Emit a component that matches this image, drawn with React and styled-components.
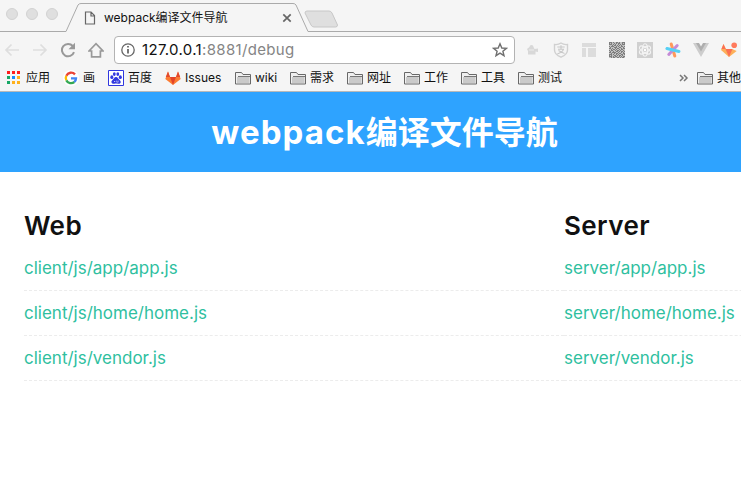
import React from 'react';
import styled, { createGlobalStyle } from 'styled-components';

const Global = createGlobalStyle`
  * { box-sizing: border-box; }
  body { margin: 0; background: #fff; overflow: hidden; font-family: Inter, "Noto Sans CJK SC", sans-serif; }
  svg { display: block; flex: none; }
`;
const Window = styled.div`width: 741px; height: 479px; overflow: hidden;`;
const TabStrip = styled.div`
  height: 32px; display: flex; position: relative; background: #f5f5f5;
`;
const Outline = styled.svg`position: absolute; left: 0; top: 0;`;
const Lights = styled.div`display: flex; gap: 8px; padding: 8px 0 0 6px; width: 84px;`;
const Light = styled.i`
  width: 12px; height: 12px; border-radius: 50%; background: #dfdfdf; border: 1px solid #d2d2d2;
`;
const Tab = styled.div`
  position: relative; width: 210px; height: 32px; display: flex; align-items: center; padding-top: 4px;
`;
const Label = styled.span`
  font-size: ${p => p.$size || 12}px; line-height: 18px; letter-spacing: ${p => p.$ls || 0}px;
  color: ${p => p.$color || '#111'}; white-space: nowrap;
`;
const TabTitle = styled(Label)`margin-left: 8px; width: 178px;`;
const Toolbar = styled.div`
  height: 34px; background: #f5f5f5; display: flex; align-items: center; padding: 2px 0 0 4px;
`;
const Nav = styled.div`display: flex; gap: 12px; width: 110px;`;
const Address = styled.div`
  width: 401px; height: 28px; border: 1px solid #b3b3b3; border-radius: 4px; background: #fff;
  display: flex; align-items: center; padding: 0 6px;
`;
const Url = styled(Label)`flex: 1; margin-left: 7px;`;
const Extensions = styled.div`display: flex; gap: 12px; margin-left: 10px;`;
const Bookmarks = styled.div`
  height: 26px; background: #f5f5f5; border-bottom: 1px solid #b9b9b9;
  display: grid; align-items: center; padding: 0 0 2px 7px;
  grid-template-columns: 56px 45px 57px 70px 55px 57px 57px 57px 57px 161px 18px 60px;
`;
const Bookmark = styled.div`display: flex; align-items: center; gap: ${p => p.$gap || 4}px;`;
const Banner = styled.header`
  height: 80px; background: #2ea3ff; display: flex; align-items: center; justify-content: center; padding-left: 28px;
`;
const Title = styled.h1`
  margin: 0; font: 700 32px/48px Inter, "Noto Sans CJK SC", sans-serif; color: #fff; white-space: nowrap;
`;
const Latin = styled.span`font-size: 33px; letter-spacing: 1.1px;`;
const Columns = styled.main`
  display: grid; grid-template-columns: 540px 540px; padding: 35px 0 0 24px; width: 1104px;
`;
const Heading = styled.h2`
  margin: 0 0 1px; font-size: 26px; line-height: 38px; font-weight: 600; color: #111; letter-spacing: .4px;
`;
const FileRow = styled.div`
  height: 45px; border-bottom: 1px dashed #ececec; display: flex; align-items: center;
`;
const FileLink = styled.a`font-size: 17px; line-height: 24px; color: #2fbf9f;`;

const Svg = ({ w = 16, h = w, vb, children }) => <svg width={w} height={h} viewBox={vb || `0 0 ${w} ${h}`} fill="none">{children}</svg>;
const Arrow = ({ right }) => <Svg><path d={right ? 'M1 8H14M8.5 2.5L14 8L8.5 13.5' : 'M15 8H2M7.5 2.5L2 8L7.5 13.5'} stroke="#dedede" strokeWidth="1.7" /></Svg>;
const Reload = () => <Svg><path d="M12.8 4A6.2 6.2 0 1 0 14 10.2" stroke="#999" strokeWidth="2" /><path d="M15 .8V7.3H8.5Z" fill="#999" /></Svg>;
const Home = () => <Svg><path d="M1 9L8 1.7L15 9H12.4V14.8H3.6V9Z" stroke="#999" strokeWidth="1.7" /></Svg>;
const Folder = () => <Svg w={17} h={14}><path d="M.5 13V1.5H6.5L8 3.5H15.5V13Z" fill="#f0f0f0" stroke="#686868" /><path d="M2 6H14.5V12H2Z" fill="#cacaca" /><path d="M3 5.5H15" stroke="#777" /></Svg>;
const Apps = () => <Svg w={14}>{['#ff1d1d', '#ff1d1d', '#ff1d1d', '#16a765', '#1689fc', '#ffb11b', '#16a765', '#ffb11b', '#ffb11b'].map((c, i) => <rect key={i} x={(i % 3) * 5} y={Math.floor(i / 3) * 5} width="3" height="3" fill={c} />)}</Svg>;
const Google = () => <Svg w={16} vb="0 0 48 48"><circle cx="24" cy="24" r="24" fill="#fff" /><g strokeWidth="7"><path d="M36 13A16 16 0 0 0 10 17" stroke="#ea4335" /><path d="M10 17A16 16 0 0 0 10 31" stroke="#fbbc05" /><path d="M10 31A16 16 0 0 0 34 36" stroke="#34a853" /><path d="M34 36A16 16 0 0 0 39 25H24" stroke="#4285f4" /></g></Svg>;
const Baidu = () => <Svg><path d="M.5.5H15.5V15.5H.5Z" fill="#fff" stroke="#3037df" /><g fill="#3037df"><ellipse cx="3.8" cy="7.2" rx="1.5" ry="1.9" /><ellipse cx="6.3" cy="4.1" rx="1.4" ry="1.9" /><ellipse cx="9.8" cy="4.1" rx="1.4" ry="1.9" /><ellipse cx="12.3" cy="7.2" rx="1.5" ry="1.9" /><path d="M8 7C6 7 6 9 4.5 10C2.2 12 4 14.3 6.3 13.8C8 13.4 9 13.6 10 13.8C13 14.2 13.6 11.5 11.5 10C10 9 10 7 8 7" /></g><circle cx="6.7" cy="11.5" r=".6" fill="#fff" /><path d="M8.7 10.5V12.2H10.2V10.5" stroke="#fff" strokeWidth=".5" /></Svg>;
const GitLab = () => <Svg><path d="M3 1.5L5 7H11L13 1.5L15.7 9L8 15L.3 9Z" fill="#fc7b32" /><path d="M5 7H11L8 15Z" fill="#e24329" /><path d="M.8 7L3 1.5L5 7ZM11 7L13 1.5L15.2 7Z" fill="#e24a2e" /></Svg>;
const GitLabAlert = () => <Svg><path d="M0 8L2.5 2L5 7H11L15.7 9L8 15Z" fill="#fdb05a" /><path d="M4.5 7H11.5L8 15Z" fill="#fb7054" /><path d="M.5 7L2.5 2L4.7 7Z" fill="#fb7054" /><circle cx="13.2" cy="3.2" r="2.8" fill="#ff7b5d" /></Svg>;
const Plugin = () => <Svg><path d="M4.5 5Q4.5 3 6.5 3Q8.5 3 8.5 5L9.5 7L13 6.5V10L10.5 9.5V12.5H3V9L2 7Z" fill="#d8d8d8" /><path d="M4 8H9" stroke="#ececec" /></Svg>;
const Shield = () => <Svg><path d="M8 1Q11 3 14.5 2.5V8Q14.5 12.5 8 15.2Q1.5 12.5 1.5 8V2.5Q5 3 8 1Z" stroke="#d0d0d0" strokeWidth="1.4" /><path d="M4.3 5H11.7M8 3.3V7M5 7.2H10.5Q9.5 10.5 4.3 12M5.5 8.5Q8 10 11.5 11.5" stroke="#c8c8c8" strokeWidth="1.1" /></Svg>;
const Layout = () => <Svg><path d="M1 1H15V5H1ZM1 6H5V15H1ZM7 6H15V15H7Z" fill="#dcdcdc" /></Svg>;
const qr = ['1110100110100111', '1010010101100101', '1110101001010111', '0001011010101000', '1011100101001101', '0100011100110010', '1101001011001011', '0010110100101100', '1011001011010010', '0100100110101101', '1101111001001010', '0010010110110011', '1110100101001101', '1010011010110100', '1110101100101011', '0010110011010110'];
const Qr = () => <Svg><path d="M0 0H16V16H0Z" fill="#c2c2c2" />{qr.flatMap((r, y) => [...r].map((v, x) => v === '1' ? <rect key={`${x}-${y}`} x={x} y={y} width="1" height="1" fill="#7d7d7d" /> : null))}</Svg>;
const Atom = () => <Svg><path d="M0 0H16V16H0Z" fill="#d0d0d0" /><g stroke="#f4f4f4" strokeWidth="1.1">{[30, 90, 150].map(a => <ellipse key={a} cx="8" cy="8" rx="6.2" ry="2.7" transform={`rotate(${a} 8 8)`} />)}</g><circle cx="8" cy="8" r="1.2" fill="#fff" /></Svg>;
const Spark = () => <Svg><g strokeWidth="3" strokeLinecap="round"><path d="M6.2 2L9.8 14" stroke="#ff995c" /><path d="M12.2 3.5L3.8 12.5" stroke="#c58bd6" /><path d="M2 6.5L14 9.5" stroke="#56d0f5" /></g></Svg>;
const Vue = () => <Svg><path d="M0 1H5L8 6L11 1H16L8 15Z" fill="#cdcdcd" /><path d="M3 1H6L8 4.5L10 1H13L8 9.5Z" fill="#aeaeae" /></Svg>;
const Star = () => <Svg><path d="M8 1.8L9.8 6L14.4 6.3L10.9 9.2L12 13.7L8 11.2L4 13.7L5.1 9.2L1.6 6.3L6.2 6Z" stroke="#707070" strokeWidth="1.4" /></Svg>;

const bookmarks = [[Apps, '应用', 5], [Google, '画', 4], [Baidu, '百度', 4], [GitLab, 'Issues', 4], [Folder, 'wiki', 3], [Folder, '需求', 3], [Folder, '网址', 3], [Folder, '工作', 3], [Folder, '工具', 3], [Folder, '测试', 3]];
const files = [['client/js/app/app.js', 'server/app/app.js'], ['client/js/home/home.js', 'server/home/home.js'], ['client/js/vendor.js', 'server/vendor.js']];

export default function App() {
  return <Window><Global />
    <TabStrip>
      <Outline width="741" height="32" fill="none"><path d="M0 31.5H66L78 5Q79 3.5 81 3.5H293Q295 3.5 296 5L308 31.5H741" stroke="#aaa" /><path d="M307 11H329Q331 11 332 13L337.5 25Q337.5 27 335.5 27H314Q312 27 311 25L305 13Q305 11 307 11Z" fill="#dfdfdf" stroke="#c7c7c7" /></Outline>
      <Lights><Light /><Light /><Light /></Lights>
      <Tab><Svg w={12} h={14}><path d="M1.5 1H7L10.5 4.5V13H1.5ZM7 1V5H10.5" stroke="#666" strokeWidth="1.2" /></Svg><TabTitle>webpack编译文件导航</TabTitle><Svg w={10}><path d="M1.3 1.3L8.7 8.7M8.7 1.3L1.3 8.7" stroke="#666" strokeWidth="1.7" /></Svg></Tab>
    </TabStrip>
    <Toolbar><Nav><Arrow /><Arrow right /><Reload /><Home /></Nav>
      <Address><Svg w={14}><circle cx="7" cy="7" r="6.2" stroke="#666" strokeWidth="1.3" /><path d="M7 6V10.5M7 3V4.6" stroke="#555" strokeWidth="1.6" /></Svg><Url $size={15} $ls={0.33}>127.0.0.1<Label $size={15} $ls={0.33} $color="#858585">:8881/debug</Label></Url><Star /></Address>
      <Extensions><Plugin /><Shield /><Layout /><Qr /><Atom /><Spark /><Vue /><GitLabAlert /></Extensions>
    </Toolbar>
    <Bookmarks>{bookmarks.map(([I, t, g]) => <Bookmark key={t} $gap={g}><I /><Label>{t}</Label></Bookmark>)}<Svg w={10} h={8}><path d="M1 1L4 4L1 7M5 1L8 4L5 7" stroke="#777" strokeWidth="1.5" /></Svg><Bookmark $gap={3}><Folder /><Label>其他</Label></Bookmark></Bookmarks>
    <Banner><Title><Latin>webpack</Latin>编译文件导航</Title></Banner>
    <Columns>{['Web', 'Server'].map((name, col) => <section key={name}><Heading>{name}</Heading>{files.map(row => <FileRow key={row[col]}><FileLink>{row[col]}</FileLink></FileRow>)}</section>)}</Columns>
  </Window>;
}
